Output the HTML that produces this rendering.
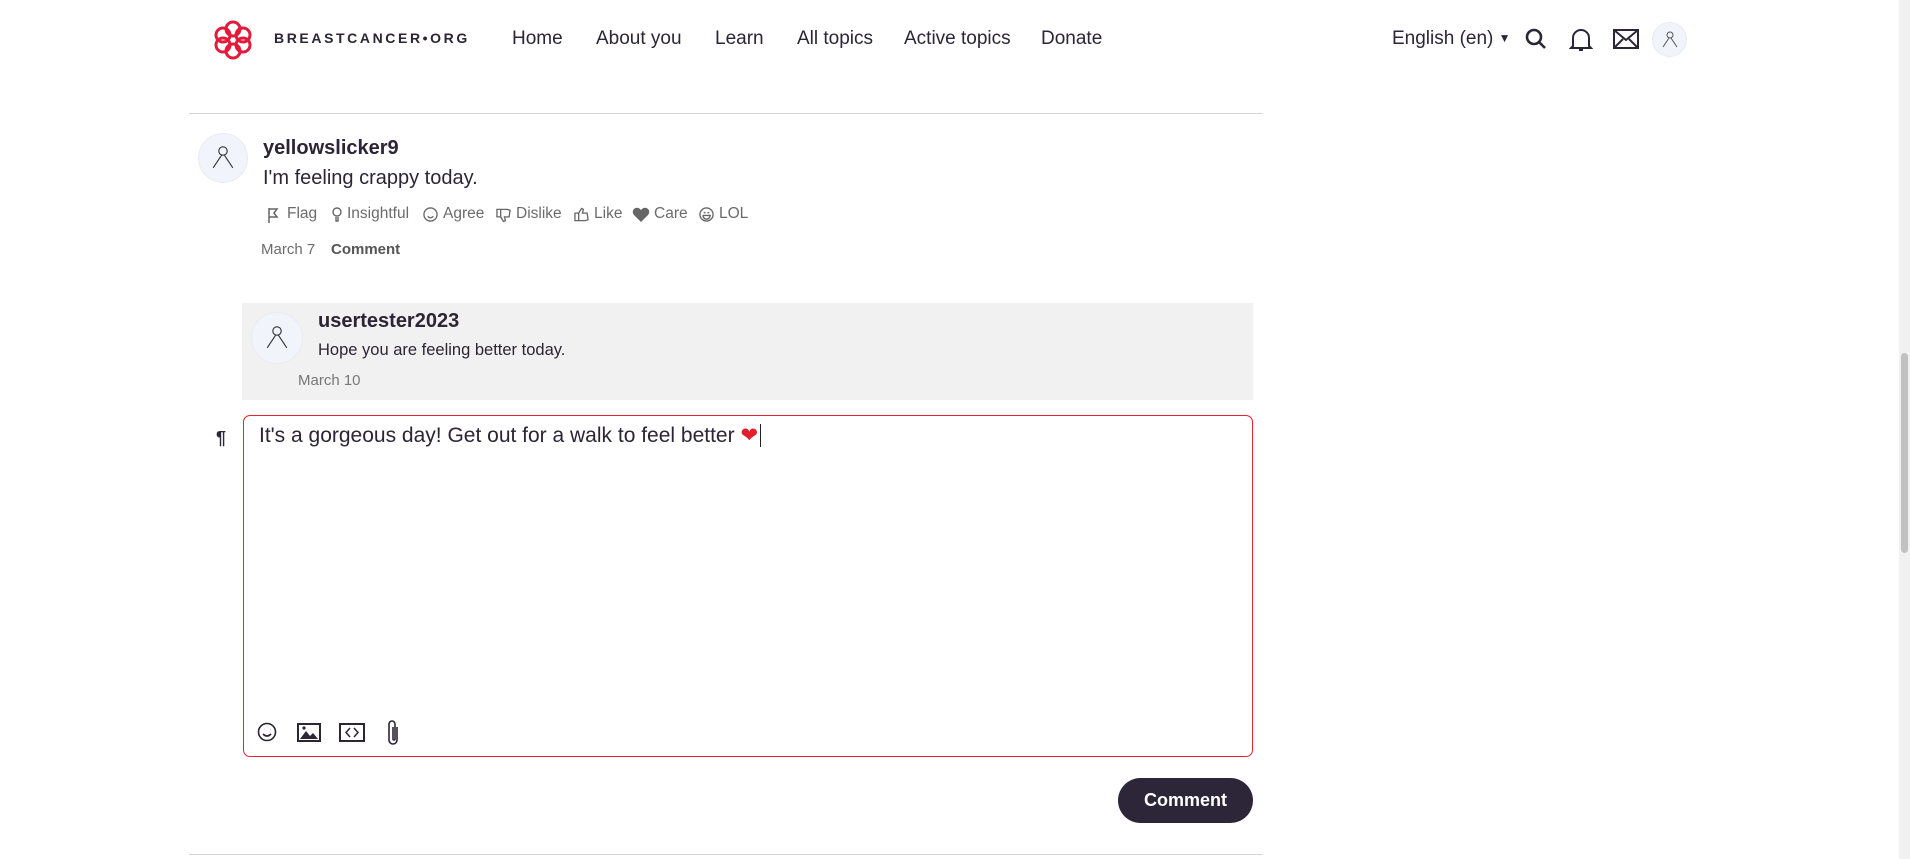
<!DOCTYPE html>
<html><head><meta charset="utf-8"><style>
*{margin:0;padding:0;box-sizing:border-box}
body{width:1910px;height:859px;overflow:hidden;background:#fff;font-family:"Liberation Sans",sans-serif;color:#2b2535;position:relative}
.a{position:absolute;white-space:nowrap}
.nav{font-size:19px;top:28px}
.av{position:absolute;border-radius:50%;background:#f1f4fa;border:1px solid #e8ebf2;display:flex;align-items:center;justify-content:center}
.r{font-size:15.5px;color:#6b6b6b;top:205px}
.r svg{position:absolute;left:-20px;top:2px}
</style></head><body>
<svg class="a" style="left:212px;top:19px" width="42" height="42" viewBox="0 0 42 42" fill="none" stroke="#e31b3a" stroke-width="3">
<circle cx="21" cy="10" r="7"/><circle cx="21" cy="32" r="7"/><circle cx="11" cy="16" r="7"/><circle cx="31" cy="16" r="7"/><circle cx="11" cy="26" r="7"/><circle cx="31" cy="26" r="7"/></svg>
<div class="a" style="left:274px;top:30px;font-size:14px;font-weight:bold;letter-spacing:2.6px;color:#2b2535">BREASTCANCER•ORG</div>
<div class="a nav" style="left:512px">Home</div>
<div class="a nav" style="left:596px">About you</div>
<div class="a nav" style="left:715px">Learn</div>
<div class="a nav" style="left:797px">All topics</div>
<div class="a nav" style="left:904px">Active topics</div>
<div class="a nav" style="left:1041px">Donate</div>
<div class="a nav" style="left:1392px">English (en) <span style="font-size:12px;vertical-align:2px">▼</span></div>
<svg class="a" style="left:1524px;top:27px" width="24" height="24" viewBox="0 0 24 24" fill="none" stroke="#2b2535" stroke-width="2.6"><circle cx="10" cy="10" r="7"/><path d="M15 15l6 6"/></svg>
<svg class="a" style="left:1569px;top:25px" width="24" height="28" viewBox="0 0 24 28" fill="none" stroke="#2b2535" stroke-width="2"><path d="M4 21V13a8 8 0 0116 0v8l2 2H2z"/><path d="M10 25h4"/></svg>
<svg class="a" style="left:1613px;top:29px" width="26" height="20" viewBox="0 0 26 20" fill="none" stroke="#2b2535" stroke-width="2"><rect x="1" y="1" width="24" height="18"/><path d="M1 1l12 10 12-10M1 19l9-9M25 19l-9-9"/></svg>
<div class="av" style="left:1652px;top:22px;width:35px;height:35px"><svg width="20" height="20" viewBox="0 0 20 20" fill="none" stroke="#555" stroke-width="1"><circle cx="10" cy="5" r="3"/><path d="M9 8L3 17M11 8l6 9"/></svg></div>
<div class="a" style="left:1899px;top:0;width:11px;height:859px;background:#f1f1f1"></div>
<div class="a" style="left:1901px;top:353px;width:7px;height:200px;background:#c1c1c1;border-radius:4px"></div>
<div class="a" style="left:189px;top:113px;width:1074px;height:1px;background:#d4d4d4"></div>
<div class="av" style="left:198px;top:133px;width:50px;height:50px"><svg width="28" height="28" viewBox="0 0 20 20" fill="none" stroke="#333" stroke-width=".8"><circle cx="10" cy="5" r="3"/><path d="M9 8L3 17M11 8l6 9"/></svg></div>
<div class="a" style="left:263px;top:137px;font-size:20px;font-weight:bold">yellowslicker9</div>
<div class="a" style="left:263px;top:167px;font-size:20px">I'm feeling crappy today.</div>
<div class="a r" style="left:287px"><svg width="14" height="16" viewBox="0 0 14 16" fill="none" stroke="#666" stroke-width="1.5"><path d="M2 1v15M2 2h8l-3 4 3 4H2"/></svg>Flag</div>
<div class="a r" style="left:347px"><svg width="10" height="16" viewBox="0 0 10 16" fill="none" stroke="#666" stroke-width="1.4" style="left:-15px"><circle cx="5" cy="5" r="4"/><path d="M4 10v4h2v-4"/></svg>Insightful</div>
<div class="a r" style="left:443px"><svg width="15" height="15" viewBox="0 0 16 16" fill="none" stroke="#666" stroke-width="1.4"><circle cx="8" cy="8" r="7"/><path d="M5 10q3 3 6 0M6 6h.1M10 6h.1"/></svg>Agree</div>
<div class="a r" style="left:516px"><svg width="15" height="16" viewBox="0 0 16 16" fill="none" stroke="#666" stroke-width="1.4"><path d="M1 2h4v8H1zM5 10l3 5 2-1-1-4h5l1-7-3-1H5"/></svg>Dislike</div>
<div class="a r" style="left:594px"><svg width="15" height="16" viewBox="0 0 16 16" fill="none" stroke="#666" stroke-width="1.4"><path d="M1 6h4v8H1zM5 6l3-5 2 1-1 4h5l1 7-3 1H5"/></svg>Like</div>
<div class="a r" style="left:654px"><svg width="18" height="16" viewBox="0 0 18 16" fill="#666" style="left:-22px"><path d="M9 15L2 8a4 4 0 016-6l1 1 1-1a4 4 0 016 6z"/></svg>Care</div>
<div class="a r" style="left:719px"><svg width="15" height="15" viewBox="0 0 16 16" fill="none" stroke="#666" stroke-width="1.4"><circle cx="8" cy="8" r="7"/><path d="M4 9h8q-1 4-4 4t-4-4M5 6h2M9 6h2"/></svg>LOL</div>
<div class="a" style="left:261px;top:241px;font-size:15px;color:#6b6b6b">March 7</div>
<div class="a" style="left:331px;top:241px;font-size:15px;color:#555;font-weight:bold">Comment</div>
<div class="a" style="left:242px;top:303px;width:1011px;height:97px;background:#f1f1f1"></div>
<div class="av" style="left:251px;top:312px;width:52px;height:52px"><svg width="28" height="28" viewBox="0 0 20 20" fill="none" stroke="#333" stroke-width=".8"><circle cx="10" cy="5" r="3"/><path d="M9 8L3 17M11 8l6 9"/></svg></div>
<div class="a" style="left:318px;top:310px;font-size:20px;font-weight:bold">usertester2023</div>
<div class="a" style="left:318px;top:341px;font-size:16.5px">Hope you are feeling better today.</div>
<div class="a" style="left:298px;top:372px;font-size:15px;color:#777">March 10</div>
<div class="a" style="left:216px;top:428px;font-size:18px;font-weight:bold">¶</div>
<div class="a" style="left:243px;top:415px;width:1010px;height:342px;border:1.5px solid #e8232f;border-radius:7px"></div>
<div class="a" style="left:259px;top:423px;font-size:21px">It's a gorgeous day! Get out for a walk to feel better <span style="color:#e41e2b">❤</span><span style="border-left:1.5px solid #222;margin-left:2px"> </span></div>
<svg class="a" style="left:257px;top:722px" width="20" height="20" viewBox="0 0 20 20" fill="none" stroke="#2b2535" stroke-width="1.6"><circle cx="10" cy="10" r="8.5"/><path d="M6 12q4 4 8 0M7 7.5h.1M13 7.5h.1"/></svg>
<svg class="a" style="left:297px;top:723px" width="24" height="19" viewBox="0 0 24 19"><rect x="1" y="1" width="22" height="17" fill="none" stroke="#2b2535" stroke-width="2"/><path d="M3 16l6-8 4 5 3-3 5 6z" fill="#2b2535"/><circle cx="7" cy="5" r="1.6" fill="#2b2535"/></svg>
<svg class="a" style="left:339px;top:723px" width="26" height="19" viewBox="0 0 26 19" fill="none" stroke="#2b2535" stroke-width="2"><rect x="1" y="1" width="24" height="17"/><path d="M11 5l-4 4.5 4 4.5M15 5l4 4.5-4 4.5" stroke-width="1.5"/></svg>
<svg class="a" style="left:385px;top:719px" width="16" height="28" viewBox="0 0 16 28" fill="none" stroke="#2b2535" stroke-width="1.6"><path d="M12 8v13a4 4 0 01-8 0V5a3 3 0 016 0v15a1 1 0 01-2 0V8"/></svg>
<div class="a" style="left:1118px;top:778px;width:135px;height:45px;background:#2d2639;border-radius:23px;color:#fff;font-size:18px;font-weight:bold;display:flex;align-items:center;justify-content:center">Comment</div>
<div class="a" style="left:189px;top:854px;width:1074px;height:1px;background:#d4d4d4"></div>
</body></html>
